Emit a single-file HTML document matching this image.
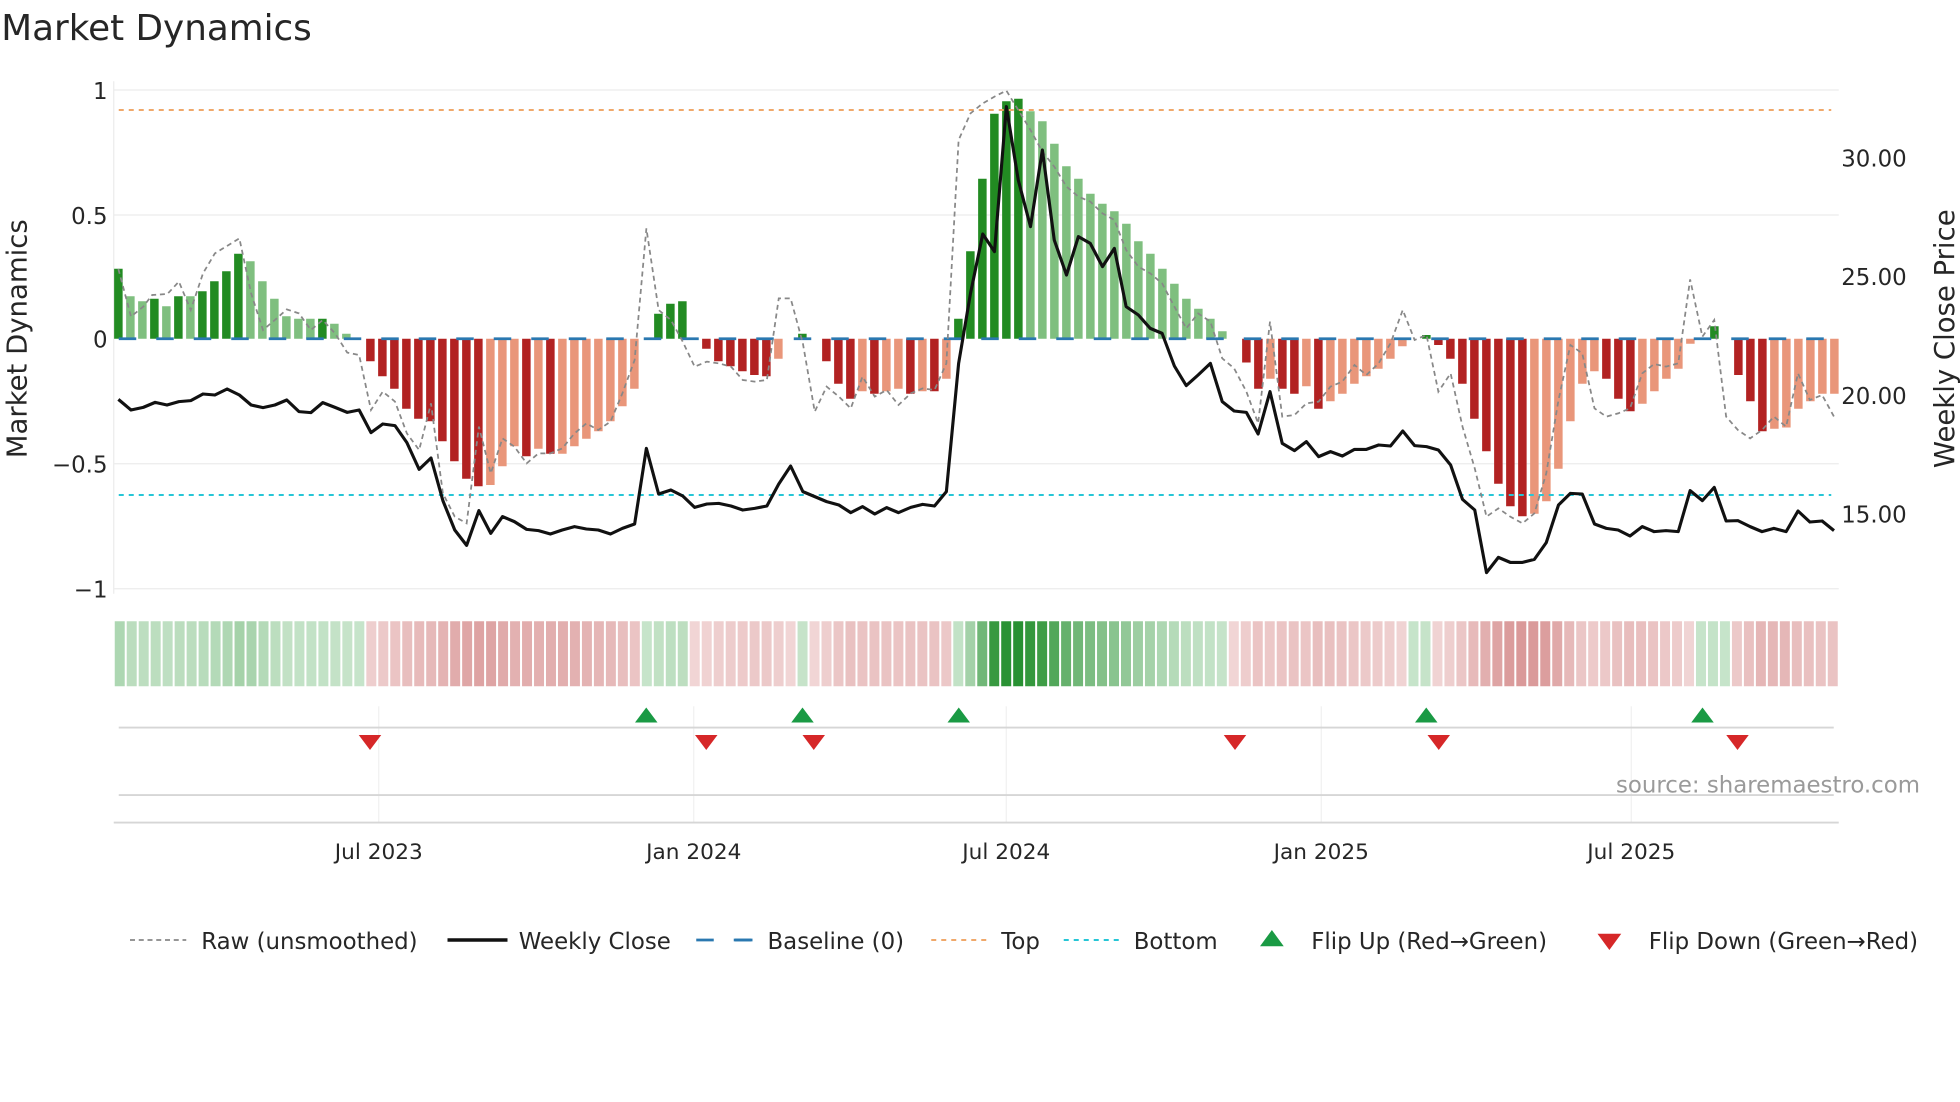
<!DOCTYPE html>
<html><head><meta charset="utf-8">
<style>
html,body{margin:0;padding:0;background:#fff;width:1960px;height:1102px;overflow:hidden}
svg{display:block}
text{font-family:"DejaVu Sans","Liberation Sans",sans-serif;fill:#262626}
</style></head>
<body>
<svg id="s" width="1960" height="1102" viewBox="0 0 1568 881.6" xmlns="http://www.w3.org/2000/svg">
<text x="1" y="32" font-size="28.6">Market Dynamics</text>
<g stroke="#ececec" stroke-width="1">
<line x1="91" y1="72" x2="1471" y2="72"/><line x1="91" y1="172" x2="1471" y2="172"/>
<line x1="91" y1="371" x2="1471" y2="371"/><line x1="91" y1="471" x2="1471" y2="471"/>
<line x1="91" y1="65" x2="91" y2="475"/>
<g stroke="#f0f0f0"><line x1="303" y1="565" x2="303" y2="658"/><line x1="555" y1="565" x2="555" y2="658"/><line x1="805" y1="565" x2="805" y2="658"/><line x1="1057" y1="565" x2="1057" y2="658"/><line x1="1305" y1="565" x2="1305" y2="658"/></g>
</g>
<g font-size="18.3" text-anchor="end">
<text x="86" y="79">1</text><text x="86" y="179">0.5</text><text x="86" y="278">0</text><text x="86" y="378">−0.5</text><text x="86" y="478">−1</text>
</g>
<g font-size="18.3">
<text x="1473" y="133">30.00</text><text x="1473" y="228">25.00</text><text x="1473" y="323">20.00</text><text x="1473" y="418">15.00</text>
</g>
<text font-size="22" transform="translate(21,271) rotate(-90)" text-anchor="middle">Market Dynamics</text>
<text font-size="22" transform="translate(1563,271) rotate(-90)" text-anchor="middle">Weekly Close Price</text>
<g id="bars"></g>
<line x1="95" y1="88" x2="1465" y2="88" stroke="#f0a86a" stroke-width="1.6" stroke-dasharray="4,4"/>
<line x1="95" y1="396" x2="1465" y2="396" stroke="#26c6d6" stroke-width="1.6" stroke-dasharray="4,4"/>
<line x1="95" y1="271" x2="1465" y2="271" stroke="#2a78b0" stroke-width="2.2" stroke-dasharray="14,16"/>
<path id="raw" fill="none" stroke="#888" stroke-width="1.4" stroke-dasharray="4,3"/>
<path id="close" fill="none" stroke="#111" stroke-width="2.5" stroke-linejoin="round"/>
<g id="strip"></g>
<line x1="95" y1="582" x2="1467" y2="582" stroke="#d6d6d6" stroke-width="1.5"/>
<line x1="95" y1="636" x2="1467" y2="636" stroke="#d6d6d6" stroke-width="1.5"/>
<line x1="91" y1="658" x2="1471" y2="658" stroke="#d6d6d6" stroke-width="1.5"/>
<g id="tri"></g>
<text x="1536" y="634" font-size="18.3" text-anchor="end" style="fill:#9a9a9a">source: sharemaestro.com</text>
<g font-size="17.3" text-anchor="middle">
<text x="303" y="687">Jul 2023</text><text x="555" y="687">Jan 2024</text><text x="805" y="687">Jul 2024</text><text x="1057" y="687">Jan 2025</text><text x="1305" y="687">Jul 2025</text>
</g>
<g font-size="18.3">
<line x1="104" y1="752" x2="149" y2="752" stroke="#888" stroke-width="1.4" stroke-dasharray="4,3"/>
<text x="161" y="759">Raw (unsmoothed)</text>
<line x1="358" y1="752" x2="406" y2="752" stroke="#111" stroke-width="2.8"/>
<text x="415" y="759">Weekly Close</text>
<line x1="557" y1="752" x2="602" y2="752" stroke="#2a78b0" stroke-width="2.2" stroke-dasharray="14,16"/>
<line x1="588" y1="752" x2="602" y2="752" stroke="#2a78b0" stroke-width="2.2"/>
<text x="614" y="759">Baseline (0)</text>
<line x1="745" y1="752" x2="790" y2="752" stroke="#f0a86a" stroke-width="1.6" stroke-dasharray="4,4"/>
<text x="801" y="759">Top</text>
<line x1="851" y1="752" x2="896" y2="752" stroke="#26c6d6" stroke-width="1.6" stroke-dasharray="4,4"/>
<text x="907" y="759">Bottom</text>
<polygon points="1008,757 1027,757 1017.5,744" fill="#1a9a44"/>
<text x="1049" y="759">Flip Up (Red→Green)</text>
<polygon points="1278,747 1297,747 1287.5,760" fill="#d62728"/>
<text x="1319" y="759">Flip Down (Green→Red)</text>
</g>
</svg>
<script>
var NS="http://www.w3.org/2000/svg";
var B=[[.28,'G'],[.17,'g'],[.15,'g'],[.16,'G'],[.13,'g'],[.17,'G'],[.17,'g'],[.19,'G'],[.23,'G'],[.27,'G'],[.34,'G'],[.31,'g'],[.23,'g'],[.16,'g'],[.09,'g'],[.08,'g'],[.08,'g'],[.08,'G'],[.06,'g'],[.02,'g'],[0,'g'],
[-.09,'R'],[-.15,'R'],[-.2,'R'],[-.28,'R'],[-.32,'R'],[-.33,'R'],[-.41,'R'],[-.49,'R'],[-.56,'R'],[-.59,'R'],[-.585,'r'],[-.51,'r'],[-.43,'r'],[-.47,'R'],[-.44,'r'],[-.46,'R'],[-.46,'r'],[-.43,'r'],[-.4,'r'],[-.37,'r'],[-.33,'r'],[-.27,'r'],[-.2,'r'],[0,'g'],
[.1,'G'],[.14,'G'],[.15,'G'],[0,'r'],[-.04,'R'],[-.09,'R'],[-.11,'R'],[-.13,'R'],[-.145,'R'],[-.15,'R'],[-.08,'r'],[0,'r'],[.02,'G'],[0,'r'],[-.09,'R'],[-.18,'R'],[-.24,'R'],[-.21,'r'],[-.22,'R'],[-.21,'r'],[-.2,'r'],[-.22,'R'],[-.21,'r'],[-.21,'R'],[-.16,'r'],
[.08,'G'],[.35,'G'],[.64,'G'],[.9,'G'],[.95,'G'],[.96,'G'],[.91,'g'],[.87,'g'],[.78,'g'],[.69,'g'],[.64,'g'],[.58,'g'],[.54,'g'],[.51,'g'],[.46,'g'],[.39,'g'],[.34,'g'],[.28,'g'],[.22,'g'],[.16,'g'],[.12,'g'],[.08,'g'],[.03,'g'],[0,'r'],
[-.095,'R'],[-.2,'R'],[-.16,'r'],[-.2,'R'],[-.22,'R'],[-.19,'r'],[-.28,'R'],[-.25,'r'],[-.22,'r'],[-.18,'r'],[-.15,'r'],[-.12,'r'],[-.08,'r'],[-.03,'r'],[0,'g'],[.015,'G'],[-.025,'R'],[-.08,'R'],[-.18,'R'],[-.32,'R'],[-.45,'R'],[-.58,'R'],[-.67,'R'],[-.71,'R'],[-.7,'r'],[-.65,'r'],[-.52,'r'],[-.33,'r'],[-.18,'r'],[-.13,'r'],[-.16,'R'],[-.24,'R'],[-.29,'R'],[-.26,'r'],[-.21,'r'],[-.16,'r'],[-.12,'r'],[-.02,'r'],[0,'g'],[.05,'G'],[0,'g'],
[-.145,'R'],[-.25,'R'],[-.37,'R'],[-.36,'r'],[-.355,'r'],[-.28,'r'],[-.25,'r'],[-.22,'r'],[-.22,'r']];
var col={G:'#228b22',g:'#7fbf7f',R:'#b22222',r:'#e9967a'};
var bars=document.getElementById('bars'),strip=document.getElementById('strip');
function el(p,t,a){var e=document.createElementNS(NS,t);for(var k in a)e.setAttribute(k,a[k]);p.appendChild(e);return e;}
var n=B.length;
for(var i=0;i<n;i++){
 var x=94.7+i*9.6,v=B[i][0],h=Math.abs(v)*200;
 if(h>0.5) el(bars,'rect',{x:x-3.4,y:v>0?271-h:271,width:6.8,height:h,fill:col[B[i][1]]});
 var sx=91+i*(1380/n),c;
 var pos=(B[i][1]=='G'||B[i][1]=='g');
 if(pos){var t=Math.min(1,0.15+Math.pow(Math.abs(v),1.5)*0.85);c='rgb('+Math.round(228-(228-30)*t)+','+Math.round(243-(243-140)*t)+','+Math.round(230-(230-40)*t)+')';}
 else{var t=Math.min(1,0.12+Math.abs(v)*0.8);c='rgb('+Math.round(246-(246-205)*t)+','+Math.round(226-(226-120)*t)+','+Math.round(226-(226-120)*t)+')';}
 el(strip,'rect',{x:sx+0.8,y:497,width:1380/n-1.6,height:52,fill:c});
}
function conv(arr,off){var o=[];for(var i=0;i<arr.length;i+=2)o.push([off+arr[i]/3.267,64+arr[i+1]/3.75]);return o;}
var c1=[22,958,55,990,87,982,118,967,149,975,180,965,211,962,243,942,274,945,306,927,338,945,369,975,400,983,431,975,462,960,494,995,525,998,556,968,588,982,620,997,651,990,682,1058,713,1032,745,1037,776,1088,808,1168,839,1134,870,1262,901,1350,932,1396,964,1292,995,1360,1026,1310,1057,1325,1089,1348,1120,1352,1151,1362,1182,1350,1214,1340,1245,1347,1276,1350,1308,1362,1339,1345,1371,1332,1402,1105,1434,1242,1466,1230,1497,1248,1528,1282,1560,1272];
var c2=[75,1270,107,1278,138,1290,169,1285,201,1278,232,1212,263,1158,295,1235,326,1250,357,1265,389,1275,420,1298,451,1280,483,1302,514,1283,545,1298,577,1282,608,1273,639,1278,670,1235,702,850,733,640,765,462,796,515,827,80,858,300,890,440,921,210,952,480,984,585,1015,470,1046,490,1078,560,1109,505,1140,680,1172,705,1203,745,1234,760,1266,858,1297,917,1328,885,1360,850,1391,965,1422,993,1454,997,1485,1062,1516,935,1548,1090];
var c3=[64,1112,95,1085,127,1130,158,1115,189,1128,221,1108,252,1108,284,1095,315,1098,347,1053,378,1097,409,1100,440,1110,472,1155,503,1258,535,1290,566,1478,597,1432,628,1447,660,1447,691,1438,722,1388,754,1275,785,1240,816,1242,848,1332,879,1345,910,1350,941,1368,973,1340,1004,1355,1035,1352,1067,1355,1098,1232,1130,1262,1161,1222,1192,1323,1223,1322,1255,1340,1286,1355,1317,1345,1349,1355,1380,1293,1411,1326,1443,1323,1474,1352];
var r1=[22,567,55,710,87,680,110,645,150,642,180,605,211,690,243,580,274,520,338,475,369,640,400,750,431,720,462,688,494,700,525,750,556,720,588,760,620,818,651,825,682,990,713,935,745,965,776,1060,808,1110,839,970,870,1240,901,1310,932,1330,964,1040,995,1180,1026,1075,1057,1100,1089,1150,1120,1120,1151,1120,1182,1105,1214,1060,1245,1030,1276,1050,1308,1025,1339,940,1371,840,1402,445,1434,690,1466,720,1497,785,1528,860,1560,845];
var r2=[75,850,107,860,138,900,169,905,201,900,232,655,263,655,295,790,326,995,357,920,389,950,420,985,451,890,483,950,514,930,545,975,577,940,608,925,639,930,670,850,702,180,733,100,765,70,796,50,827,32,858,90,890,150,921,215,952,260,984,320,1015,350,1046,365,1078,400,1109,420,1140,510,1172,560,1203,580,1234,610,1266,680,1297,745,1328,700,1360,725,1391,835,1422,865,1454,935,1485,1030,1516,725,1548,1010];
var r3=[64,1005,95,970,127,965,158,920,189,905,221,855,252,885,284,850,315,790,347,690,378,780,409,765,440,935,472,880,503,1040,535,1165,566,1310,597,1285,628,1310,660,1330,691,1300,722,1180,754,960,785,795,816,820,848,985,879,1010,910,1000,941,985,973,880,1004,852,1035,860,1067,850,1098,598,1130,770,1161,720,1192,1010,1223,1050,1255,1075,1286,1050,1317,1010,1349,1040,1380,880,1411,960,1443,945,1474,1010];
function path(p){return 'M'+p.map(function(q){return q[0].toFixed(1)+','+q[1].toFixed(1)}).join(' L');}
document.getElementById('close').setAttribute('d',path(conv(c1,88).concat(conv(c2,552),conv(c3,1016))));
document.getElementById('raw').setAttribute('d',path(conv(r1,88).concat(conv(r2,552),conv(r3,1016))));
var tri=document.getElementById('tri');
[517,642,767,1141,1362].forEach(function(x){el(tri,'polygon',{points:(x-9)+',578 '+(x+9)+',578 '+x+',566',fill:'#1a9a44'});});
[296,565,651,988,1151,1390].forEach(function(x){el(tri,'polygon',{points:(x-9)+',588 '+(x+9)+',588 '+x+',600',fill:'#d62728'});});
</script>
</body></html>
